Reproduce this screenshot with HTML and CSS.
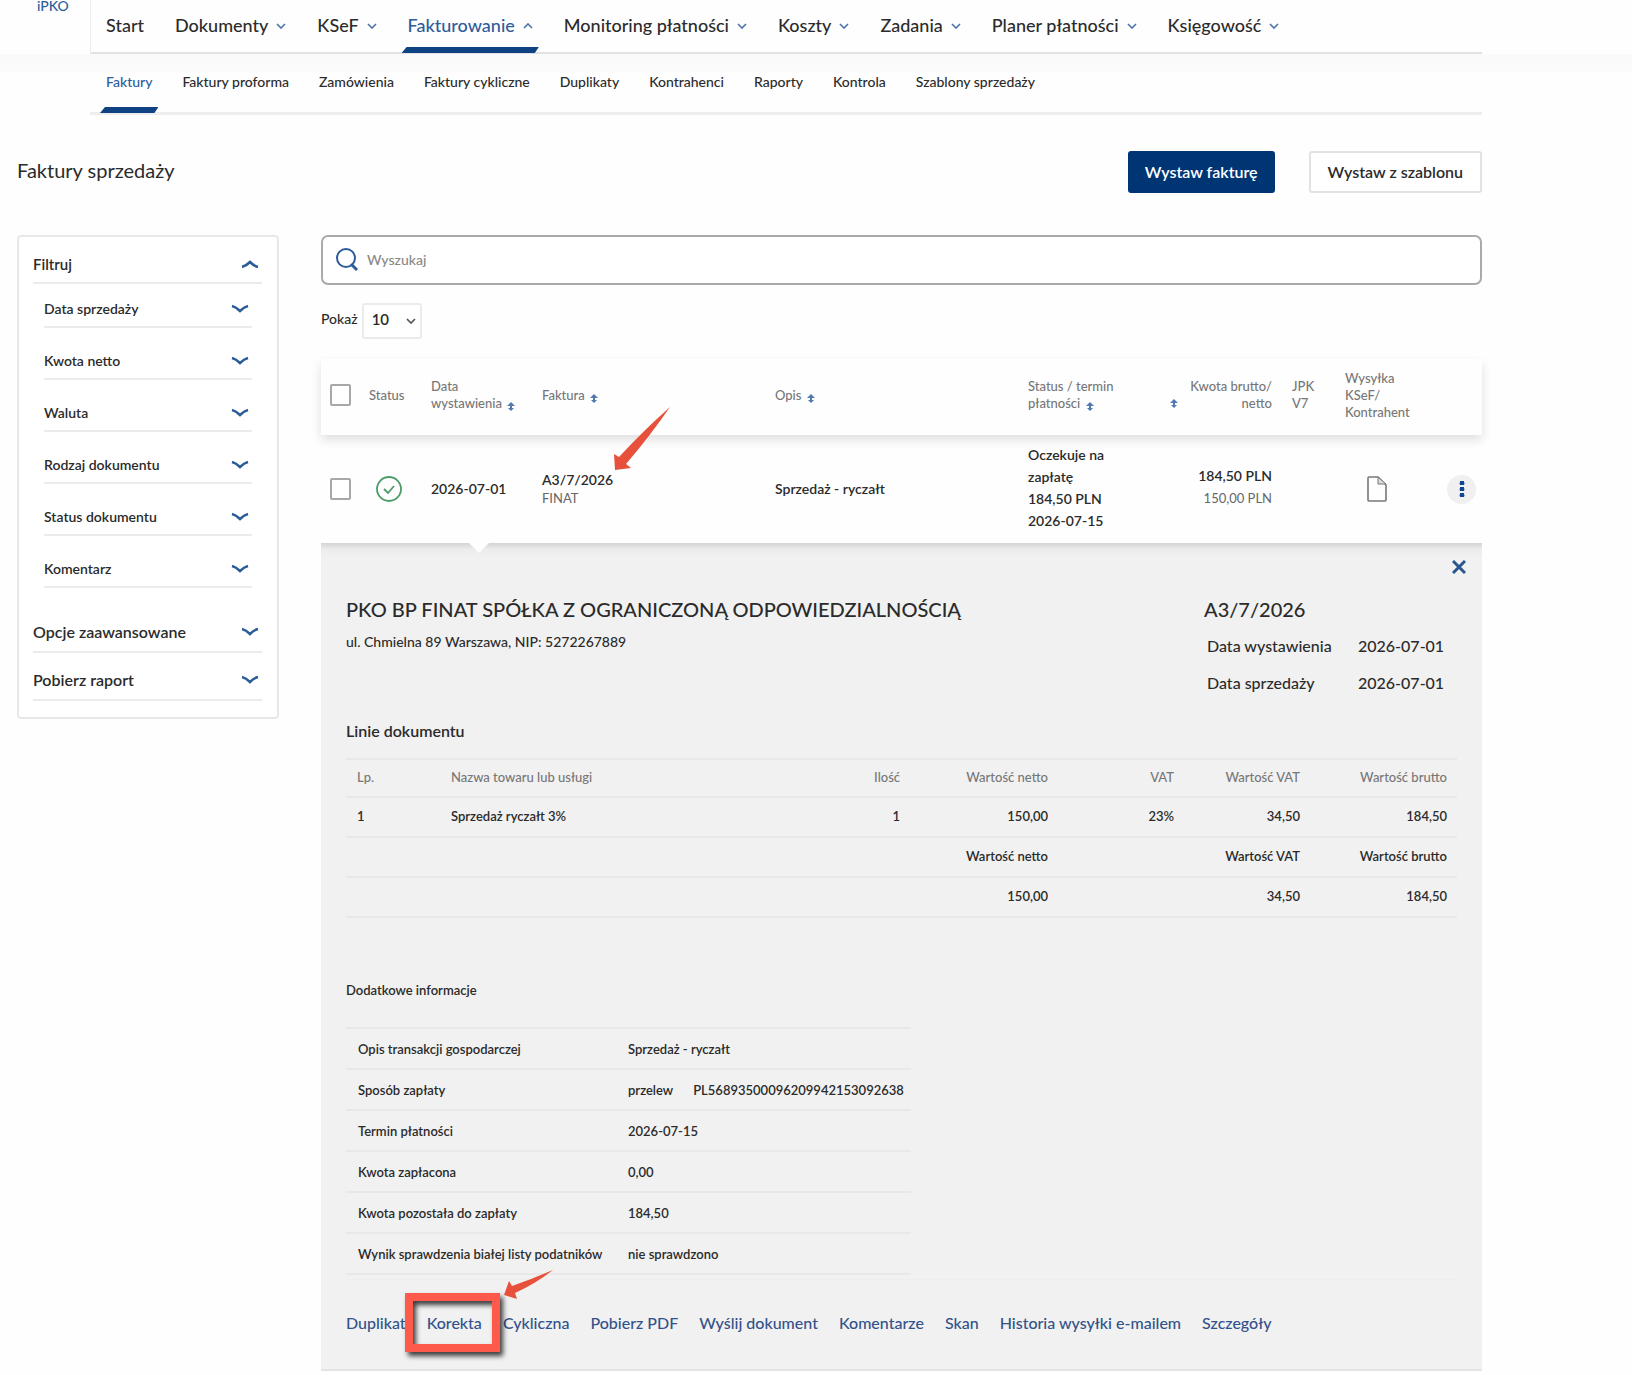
FILE: index.html
```html
<!DOCTYPE html>
<html lang="pl">
<head>
<meta charset="utf-8">
<title>Faktury sprzedaży</title>
<meta name="viewport" content="width=device-width, initial-scale=1">
<link rel="stylesheet" href="styles.css">
</head>
<body>
<svg class="symbols" aria-hidden="true">
  <symbol id="chev" viewBox="0 0 18 10"><path d="M1 2Q5 3 9 7Q13 3 17 2" fill="none" stroke="currentColor" stroke-width="2.6"/></symbol>
  <symbol id="small-chev" viewBox="0 0 10 6"><path d="M1 1l4 4 4-4" fill="none" stroke="currentColor" stroke-width="1.7"/></symbol>
  <symbol id="sort" viewBox="0 0 8 10"><path d="M4 0l4 4H0zM3 4h2v2H3zM1 6h6L4 9z" fill="currentColor"/></symbol>
</svg>
<header class="top">
  <a class="brand" href="#">iPKO</a>
  <nav class="main-nav" aria-label="Menu główne">
    <a href="#">Start</a>
    <a href="#">Dokumenty<svg><use href="#small-chev"/></svg></a>
    <a href="#">KSeF<svg><use href="#small-chev"/></svg></a>
    <a href="#" class="active">Fakturowanie<svg class="up"><use href="#small-chev"/></svg></a>
    <a href="#">Monitoring płatności<svg><use href="#small-chev"/></svg></a>
    <a href="#">Koszty<svg><use href="#small-chev"/></svg></a>
    <a href="#">Zadania<svg><use href="#small-chev"/></svg></a>
    <a href="#">Planer płatności<svg><use href="#small-chev"/></svg></a>
    <a href="#">Księgowość<svg><use href="#small-chev"/></svg></a>
  </nav>
</header>
<div class="sub-wrap">
  <nav class="sub-nav" aria-label="Fakturowanie">
    <a href="#" class="active">Faktury</a>
    <a href="#">Faktury proforma</a>
    <a href="#">Zamówienia</a>
    <a href="#">Faktury cykliczne</a>
    <a href="#">Duplikaty</a>
    <a href="#">Kontrahenci</a>
    <a href="#">Raporty</a>
    <a href="#">Kontrola</a>
    <a href="#">Szablony sprzedaży</a>
  </nav>
</div>
<main class="page">
  <div class="title-row">
    <h1>Faktury sprzedaży</h1>
    <button class="btn primary" type="button">Wystaw fakturę</button>
    <button class="btn" type="button">Wystaw z szablonu</button>
  </div>
  <div class="columns">
    <aside class="filters">
      <button type="button" class="outer">Filtruj<svg class="up"><use href="#chev"/></svg></button>
      <div class="inner">
        <button type="button">Data sprzedaży<svg><use href="#chev"/></svg></button>
        <button type="button">Kwota netto<svg><use href="#chev"/></svg></button>
        <button type="button">Waluta<svg><use href="#chev"/></svg></button>
        <button type="button">Rodzaj dokumentu<svg><use href="#chev"/></svg></button>
        <button type="button">Status dokumentu<svg><use href="#chev"/></svg></button>
        <button type="button">Komentarz<svg><use href="#chev"/></svg></button>
      </div>
      <button type="button" class="outer">Opcje zaawansowane<svg><use href="#chev"/></svg></button>
      <button type="button" class="outer">Pobierz raport<svg><use href="#chev"/></svg></button>
    </aside>
    <section class="content">
      <div class="search">
        <svg viewBox="0 0 24 26"><circle cx="11" cy="11" r="9" fill="none" stroke="#2c5c9a" stroke-width="2"/><path d="M16 17l6 6" stroke="#2c5c9a" stroke-width="3"/></svg>
        <input type="search" placeholder="Wyszukaj" aria-label="Wyszukaj">
      </div>
      <div class="show">
        <label for="count">Pokaż</label>
        <span class="select"><select id="count"><option>10</option><option>20</option></select><svg><use href="#small-chev"/></svg></span>
      </div>
      <table class="invoices">
        <colgroup><col class="c-check"><col class="c-status"><col class="c-date"><col class="c-invoice"><col><col class="c-term"><col class="c-amount"><col class="c-jpk"><col class="c-send"><col class="c-menu"></colgroup>
        <thead>
          <tr>
            <th class="check"><input type="checkbox" aria-label="Zaznacz wszystkie"></th>
            <th>Status</th>
            <th>Data<br>wystawienia <svg><use href="#sort"/></svg></th>
            <th>Faktura <svg><use href="#sort"/></svg></th>
            <th>Opis <svg><use href="#sort"/></svg></th>
            <th>Status / termin<br>płatności <svg><use href="#sort"/></svg></th>
            <th class="amount"><div><svg><use href="#sort"/></svg><span>Kwota brutto/<br>netto</span></div></th>
            <th class="jpk">JPK<br>V7</th>
            <th>Wysyłka<br>KSeF/<br>Kontrahent</th>
            <th></th>
          </tr>
        </thead>
        <tbody>
          <tr>
            <td class="check"><input type="checkbox" aria-label="Zaznacz A3/7/2026"></td>
            <td class="ok"><svg viewBox="0 0 26 26"><circle cx="13" cy="13" r="12" fill="none" stroke="#4b9c68" stroke-width="1.8"/><path d="M8 13l4 4 6-7" fill="none" stroke="#4b9c68" stroke-width="1.8"/></svg></td>
            <td>2026-07-01</td>
            <td class="number">A3/7/2026<small>FINAT</small>
              <svg class="arrow" viewBox="0 0 57 64"><path d="M56 0Q30 23 5 50L0 47L1 63L17 61L12 57Q36 29 56 0z" fill="#e7503b"/></svg></td>
            <td>Sprzedaż - ryczałt</td>
            <td class="term">Oczekuje na<br>zapłatę<br>184,50 PLN<br>2026-07-15</td>
            <td class="amount">184,50 PLN<small>150,00 PLN</small></td>
            <td></td>
            <td class="doc"><svg viewBox="0 0 20 26"><path d="M1 2q0-1 1-1h9l8 8v15q0 1-1 1H2q-1 0-1-1z" fill="none" stroke="#777" stroke-width="1.6"/><path d="M11 1v7h8z" fill="#ddd" stroke="#777"/></svg></td>
            <td><button type="button" class="dots" aria-label="Więcej"><svg viewBox="0 0 6 18"><path d="M1 1h4v1q1 1 0 3H1q-1-2 0-3zM1 7h4v1q1 1 0 3H1q-1-2 0-3zM1 13h4v1q1 1 0 3H1q-1-2 0-3z" fill="#0f4890"/></svg></button></td>
          </tr>
        </tbody>
      </table>
      <article class="details">
        <button type="button" class="close" aria-label="Zamknij"><svg viewBox="0 0 14 14"><path d="M1 1l12 12M13 1L1 13" stroke="#2a578f" stroke-width="3"/></svg></button>
        <div class="party">
          <div>
            <h2>PKO BP FINAT SPÓŁKA Z OGRANICZONĄ ODPOWIEDZIALNOŚCIĄ</h2>
            <p>ul. Chmielna 89 Warszawa, NIP: 5272267889</p>
          </div>
          <div class="meta">
            <h2>A3/7/2026</h2>
            <dl>
              <dt>Data wystawienia</dt><dd>2026-07-01</dd>
              <dt>Data sprzedaży</dt><dd>2026-07-01</dd>
            </dl>
          </div>
        </div>
        <h3>Linie dokumentu</h3>
        <table class="lines">
          <colgroup><col class="l-no"><col><col class="l-qty"><col class="l-net"><col class="l-vat"><col class="l-vat"><col class="l-gross"></colgroup>
          <thead>
            <tr><th>Lp.</th><th>Nazwa towaru lub usługi</th><th>Ilość</th><th>Wartość netto</th><th>VAT</th><th>Wartość VAT</th><th>Wartość brutto</th></tr>
          </thead>
          <tbody>
            <tr><td>1</td><td>Sprzedaż ryczałt 3%</td><td>1</td><td>150,00</td><td>23%</td><td>34,50</td><td>184,50</td></tr>
            <tr><td></td><td></td><td></td><td>Wartość netto</td><td></td><td>Wartość VAT</td><td>Wartość brutto</td></tr>
            <tr><td></td><td></td><td></td><td>150,00</td><td></td><td>34,50</td><td>184,50</td></tr>
          </tbody>
        </table>
        <h4>Dodatkowe informacje</h4>
        <table class="extra">
          <tbody>
            <tr><th>Opis transakcji gospodarczej</th><td>Sprzedaż - ryczałt</td></tr>
            <tr><th>Sposób zapłaty</th><td>przelew<span class="account">PL56893500096209942153092638</span></td></tr>
            <tr><th>Termin płatności</th><td>2026-07-15</td></tr>
            <tr><th>Kwota zapłacona</th><td>0,00</td></tr>
            <tr><th>Kwota pozostała do zapłaty</th><td>184,50</td></tr>
            <tr><th>Wynik sprawdzenia białej listy podatników</th><td>nie sprawdzono</td></tr>
          </tbody>
        </table>
        <nav class="actions" aria-label="Akcje dokumentu">
          <a href="#">Duplikat</a>
          <span class="marked"><a href="#">Korekta</a><i class="frame"></i><svg class="arrow" viewBox="0 0 50 30"><path d="M49 0Q28 9 8 16L5 11L0 25L13 29L11 23Q31 14 49 0z" fill="#e7503b"/></svg></span>
          <a href="#">Cykliczna</a>
          <a href="#">Pobierz PDF</a>
          <a href="#">Wyślij dokument</a>
          <a href="#">Komentarze</a>
          <a href="#">Skan</a>
          <a href="#">Historia wysyłki e-mailem</a>
          <a href="#">Szczegóły</a>
        </nav>
      </article>
    </section>
  </div>
</main>
</body>
</html>
```
FILE: styles.css
```css
* { box-sizing: border-box; }
body {
  margin: 0;
  background: #fefefe;
  color: #2b2b2b;
  font: 500 14px/18px Lato, "Open Sans", sans-serif;
}
h1, h2, h3, h4, p, dl, dd { margin: 0; }
a { color: inherit; text-decoration: none; }
button, input, select { font: inherit; color: inherit; }
table { border-collapse: collapse; table-layout: fixed; width: 100%; }
th, td { padding: 0; text-align: left; }
.symbols { display: none; }
.up { transform: rotate(180deg); }

.top { display: flex; height: 54px; padding-right: 150px; }
.brand { width: 90px; padding-left: 37px; color: #2c5c9a; font-size: 14px; line-height: 12px; }
.main-nav {
  flex: 1;
  display: flex;
  gap: 31px;
  padding-left: 15px;
  border-left: 1px solid #eee;
  border-bottom: 2px solid #e2e2e2;
  font-size: 18px;
  line-height: 50px;
  white-space: nowrap;
}
.main-nav a { position: relative; display: flex; align-items: center; gap: 8px; padding-bottom: 2px; }
.main-nav svg { width: 10px; height: 6px; margin-top: 2px; color: #4f77ad; }
.active { color: #2c5c9a; }
.active::after {
  content: "";
  position: absolute;
  left: -6px;
  right: -6px;
  bottom: -1px;
  height: 6px;
  background: #0f4282;
  clip-path: polygon(5px 0, 100% 0, calc(100% - 4px) 100%, 0 100%);
}

.sub-wrap { padding: 0 150px 0 90px; background: linear-gradient(#fafafa, #fbfbfb 18px, #fefefe 19px); }
.sub-nav {
  display: flex;
  gap: 30px;
  height: 61px;
  padding-left: 16px;
  border-bottom: 3px solid #eee;
  line-height: 55px;
  white-space: nowrap;
}
.sub-nav a { position: relative; }

.page { padding: 36px 150px 0 17px; }
.title-row { display: flex; align-items: center; gap: 34px; }
h1 { flex: 1; padding-bottom: 4px; font-size: 20px; font-weight: 400; line-height: 24px; }
.btn {
  height: 42px;
  padding: 0 17px;
  border: 2px solid #e2e2e2;
  border-radius: 3px;
  background: #fff;
  font-size: 16px;
  font-weight: 600;
}
.btn.primary { padding: 0 15px; border-color: #003574; background: #003574; color: #fff; }

.columns { display: grid; grid-template-columns: 262px minmax(0, 1fr); gap: 42px; align-items: start; margin-top: 42px; }
.filters { padding: 10px 15px 16px 14px; border: 2px solid #e8e8e8; border-radius: 4px; background: #fff; }
.filters button {
  display: flex;
  justify-content: space-between;
  align-items: center;
  width: 100%;
  height: 52px;
  padding: 16px 3px 0 0;
  border: 0;
  border-bottom: 2px solid #ebebeb;
  background: none;
  font-weight: 600;
}
.filters svg { width: 18px; height: 10px; color: #2c5c9a; }
.filters .outer { height: 48px; padding-top: 8px; font-size: 16px; }
.filters .outer:first-child { height: 37px; padding: 0 3px 2px 0; font-size: 15px; }
.inner { padding: 0 10px 0 11px; margin-bottom: 17px; }
.inner button:first-child { height: 44px; padding-top: 8px; }

.search {
  display: flex;
  align-items: center;
  gap: 8px;
  height: 50px;
  padding: 0 12px;
  border: 2px solid #aaa;
  border-radius: 7px;
  background: #fff;
}
.search svg { width: 24px; height: 26px; }
.search input { flex: 1; border: 0; outline: 0; padding: 0; background: none; }
.search input::placeholder { color: #888; opacity: 1; }
.show { display: flex; align-items: center; gap: 4px; margin-top: 18px; }
.show label { padding-bottom: 4px; }
.select { position: relative; }
.select select {
  appearance: none;
  width: 60px;
  height: 36px;
  padding: 0 8px 4px;
  border: 2px solid #ebebeb;
  border-radius: 3px;
  background: #fff;
  font-size: 15px;
  font-weight: 600;
}
.select svg { position: absolute; right: 6px; top: 15px; width: 10px; height: 6px; color: #555; pointer-events: none; }

.invoices { position: relative; z-index: 1; margin-top: 20px; font-weight: 600; background: #fefefe; }
.invoices thead { box-shadow: 0 5px 10px rgba(0, 0, 0, .12); }
.invoices thead tr { height: 76px; }
.invoices th { padding-bottom: 4px; font-size: 13px; line-height: 17px; font-weight: 500; color: #777; }
.invoices th svg { width: 8px; height: 10px; margin: 0 0 -4px 2px; color: #5279b0; }
.invoices tbody tr { height: 108px; }
.invoices small { display: block; font-size: 13px; font-weight: 400; color: #666; }
.c-check { width: 48px; }
.c-status { width: 62px; }
.c-date { width: 111px; }
.c-invoice { width: 233px; }
.c-term { width: 140px; }
.c-amount { width: 104px; }
.c-jpk { width: 73px; }
.c-send { width: 90px; }
.c-menu { width: 47px; }
.check { padding-left: 9px; }
.check input {
  appearance: none;
  display: block;
  width: 21px;
  height: 22px;
  margin: 0;
  border: 2px solid #a8a8a8;
  border-radius: 2px;
  background: #fff;
}
.amount, .invoices .amount small { text-align: right; }
.invoices td.amount small { line-height: 26px; }
.amount div { display: flex; justify-content: space-between; align-items: end; }
.invoices .amount svg { margin: 0 0 3px 2px; }
.jpk { padding-left: 20px; }
.ok { padding-left: 7px; }
.ok svg { display: block; width: 26px; height: 26px; }
.number { position: relative; }
.number .arrow { position: absolute; left: 72px; top: -28px; width: 57px; height: 64px; }
.term { padding-bottom: 2px; line-height: 22px; }
.doc { padding-left: 22px; }
.doc svg { display: block; width: 20px; height: 26px; }
.dots { display: grid; place-items: center; width: 29px; height: 29px; margin-left: 12px; padding: 0; border: 0; border-radius: 50%; background: #f0f0f0; }
.dots svg { width: 6px; height: 18px; }

.details {
  position: relative;
  padding: 52px 25px 35px;
  border-bottom: 2px solid #e4e4e4;
  background: linear-gradient(#d4d4d4, #ebebeb 6px, #f1f1f1 14px);
}
.details::before {
  content: "";
  position: absolute;
  left: 148px;
  top: 0;
  border: 10px solid transparent;
  border-top-color: #fefefe;
  border-bottom: 0;
}
.close { position: absolute; top: 17px; right: 16px; width: 14px; height: 14px; padding: 0; border: 0; background: none; }
.close svg { display: block; }
.party { display: flex; justify-content: space-between; }
h2 { font-size: 20px; font-weight: 500; line-height: 28px; }
.party p { margin-top: 10px; }
.meta { width: 253px; }
.meta dl { display: grid; grid-template-columns: 151px 1fr; padding-left: 3px; margin-top: 4px; font-size: 16px; line-height: 37px; }
h3 { margin-top: 20px; font-size: 16px; font-weight: 600; line-height: 20px; }
.lines { margin-top: 17px; border-top: 2px solid #e8e8e8; font-size: 13px; font-weight: 600; }
.lines tr { height: 40px; border-bottom: 2px solid #e8e8e8; }
.lines thead tr { height: 38px; }
.lines th { color: #777; font-weight: 500; }
.lines th, .lines td { text-align: right; padding: 0 10px 3px 0; }
.lines tr > :first-child { padding-left: 11px; text-align: left; }
.lines tr > :nth-child(2) { text-align: left; }
.l-no { width: 105px; }
.l-qty { width: 130px; }
.l-net { width: 148px; }
.l-vat { width: 126px; }
.l-gross { width: 147px; }
h4 { margin-top: 63px; font-size: 13px; font-weight: 600; line-height: 18px; }
.extra { width: 565px; margin-top: 28px; border-top: 2px solid #e8e8e8; font-size: 13px; font-weight: 600; }
.extra tr { height: 41px; border-bottom: 2px solid #e8e8e8; }
.extra th { width: 282px; padding-left: 12px; font-weight: 600; }
.account { margin-left: 20px; }
.actions { display: flex; gap: 21px; margin-top: 4px; padding-top: 32px; border-top: 1px solid #eee; color: #33518a; font-size: 16px; line-height: 22px; white-space: nowrap; }
.marked { position: relative; }
.frame {
  position: absolute;
  left: -22px;
  top: -19px;
  width: 95px;
  height: 59px;
  border: 8px solid #fe5a4b;
  box-shadow: 3px 4px 5px rgba(0, 0, 0, .75), inset 3px 4px 5px rgba(0, 0, 0, .75);
  pointer-events: none;
}
.marked .arrow { position: absolute; left: 77px; top: -42px; width: 50px; height: 30px; }
```
